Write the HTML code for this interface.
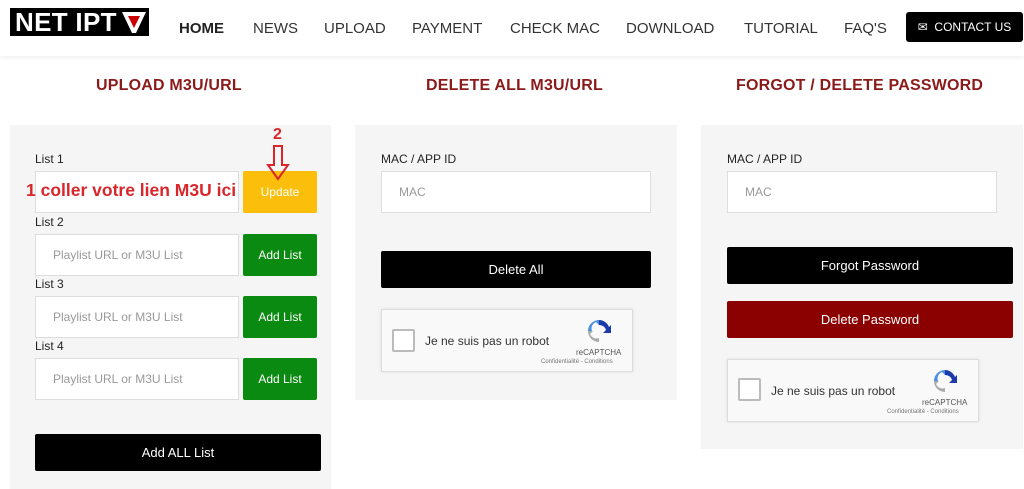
<!DOCTYPE html><html><head><meta charset="utf-8"><style>
*{box-sizing:border-box;margin:0;padding:0}
body{width:1024px;height:489px;overflow:hidden;background:#fff;font-family:"Liberation Sans",sans-serif;position:relative}
.a{position:absolute}
.nav{font-size:15px;color:#333;top:20px}
.h{font-size:16px;font-weight:bold;color:#8b1a1a;top:77px;letter-spacing:.2px}
.panel{background:#f5f5f5}
.lbl{font-size:12px;color:#222}
.inp{background:#fff;border:1px solid #ddd;font-size:12px;color:#999;padding-left:17px;display:flex;align-items:center}
.btn{display:flex;align-items:center;justify-content:center;font-size:12px;color:#fff;border-radius:2px}
.cap{background:#f9f9f9;border:1px solid #ddd;box-shadow:0 0 3px rgba(0,0,0,.1)}
</style></head><body>
<div class="a" style="left:0;top:0;width:1024px;height:56px;box-shadow:0 2px 4px rgba(0,0,0,.06)"></div>
<div class="a" style="left:10px;top:8px;width:139px;height:28px;background:#000"></div>
<div class="a" style="left:15px;top:8px;color:#fff;font-weight:bold;font-size:26px;line-height:29px;letter-spacing:0.3px;white-space:nowrap">NET IPT</div>
<svg class="a" style="left:121px;top:11px" width="26" height="23"><path d="M1 1h24L15 22h-4z" fill="#fff"/><path d="M7 5h12l-6 12z" fill="#c00"/></svg>
<div class="a nav" style="left:179px;font-weight:bold;color:#222">HOME</div>
<div class="a nav" style="left:253px">NEWS</div>
<div class="a nav" style="left:324px">UPLOAD</div>
<div class="a nav" style="left:412px">PAYMENT</div>
<div class="a nav" style="left:510px">CHECK MAC</div>
<div class="a nav" style="left:626px">DOWNLOAD</div>
<div class="a nav" style="left:744px">TUTORIAL</div>
<div class="a nav" style="left:844px">FAQ'S</div>
<div class="a btn" style="left:906px;top:12px;width:117px;height:30px;background:#000;font-size:12px;border-radius:3px">✉&nbsp; CONTACT US</div>

<div class="a h" style="left:96px">UPLOAD M3U/URL</div>
<div class="a h" style="left:426px">DELETE ALL M3U/URL</div>
<div class="a h" style="left:736px">FORGOT / DELETE PASSWORD</div>

<div class="a panel" style="left:10px;top:125px;width:321px;height:364px"></div>
<div class="a lbl" style="left:35px;top:152px">List 1</div>
<div class="a inp" style="left:35px;top:171px;width:204px;height:42px"></div>
<div class="a btn" style="left:243px;top:171px;width:74px;height:42px;background:#fbbf0b">Update</div>
<div class="a" style="left:26px;top:180px;font-size:17.5px;font-weight:bold;color:#d9262b;white-space:nowrap">1 coller votre lien M3U ici</div>
<div class="a" style="left:273px;top:126px;font-size:16px;font-weight:bold;color:#d9262b">2</div>
<svg class="a" style="left:266px;top:145px" width="24" height="36"><path d="M8 1h8v19h6L12 34 2 20h6z" fill="none" stroke="#d9262b" stroke-width="2"/></svg>
<div class="a lbl" style="left:35px;top:215px">List 2</div>
<div class="a inp" style="left:35px;top:234px;width:204px;height:42px">Playlist URL or M3U List</div>
<div class="a btn" style="left:243px;top:234px;width:74px;height:42px;background:#0a8a10">Add List</div>
<div class="a lbl" style="left:35px;top:277px">List 3</div>
<div class="a inp" style="left:35px;top:296px;width:204px;height:42px">Playlist URL or M3U List</div>
<div class="a btn" style="left:243px;top:296px;width:74px;height:42px;background:#0a8a10">Add List</div>
<div class="a lbl" style="left:35px;top:339px">List 4</div>
<div class="a inp" style="left:35px;top:358px;width:204px;height:42px">Playlist URL or M3U List</div>
<div class="a btn" style="left:243px;top:358px;width:74px;height:42px;background:#0a8a10">Add List</div>
<div class="a btn" style="left:35px;top:434px;width:286px;height:37px;background:#000;font-size:13px">Add ALL List</div>

<div class="a panel" style="left:355px;top:125px;width:322px;height:275px"></div>
<div class="a lbl" style="left:381px;top:152px">MAC / APP ID</div>
<div class="a inp" style="left:381px;top:171px;width:270px;height:42px">MAC</div>
<div class="a btn" style="left:381px;top:251px;width:270px;height:37px;background:#000;font-size:13px">Delete All</div>
<div class="a cap" style="left:381px;top:309px;width:252px;height:63px"></div>
<div class="a" style="left:392px;top:329px;width:23px;height:23px;border:2px solid #bbb;border-radius:2px;background:#fff"></div>
<div class="a" style="left:425px;top:334px;font-size:12px;color:#333">Je ne suis pas un robot</div>
<svg class="a" style="left:586px;top:318px" width="26" height="26"><path d="M13 2a11 11 0 0 1 10 7l2-2v8h-8l3-3a7 7 0 0 0-7-5z" fill="#1c3aa9"/><path d="M2 13a11 11 0 0 1 11-11v5l-3-3a7 7 0 0 0-4 9z" fill="#4a90e2"/><path d="M13 24A11 11 0 0 1 2 13h5l-3 3a7 7 0 0 0 9 4z" fill="#aaa"/></svg>
<div class="a" style="left:576px;top:348px;font-size:8px;color:#555">reCAPTCHA</div>
<div class="a" style="left:541px;top:359px;font-size:6px;color:#777">Confidentialité - Conditions</div>

<div class="a panel" style="left:701px;top:125px;width:322px;height:324px"></div>
<div class="a lbl" style="left:727px;top:152px">MAC / APP ID</div>
<div class="a inp" style="left:727px;top:171px;width:270px;height:42px">MAC</div>
<div class="a btn" style="left:727px;top:247px;width:286px;height:37px;background:#000;font-size:13px">Forgot Password</div>
<div class="a btn" style="left:727px;top:301px;width:286px;height:37px;background:#8b0000;font-size:13px">Delete Password</div>
<div class="a cap" style="left:727px;top:359px;width:252px;height:63px"></div>
<div class="a" style="left:738px;top:378px;width:23px;height:23px;border:2px solid #bbb;border-radius:2px;background:#fff"></div>
<div class="a" style="left:771px;top:384px;font-size:12px;color:#333">Je ne suis pas un robot</div>
<svg class="a" style="left:932px;top:368px" width="26" height="26"><path d="M13 2a11 11 0 0 1 10 7l2-2v8h-8l3-3a7 7 0 0 0-7-5z" fill="#1c3aa9"/><path d="M2 13a11 11 0 0 1 11-11v5l-3-3a7 7 0 0 0-4 9z" fill="#4a90e2"/><path d="M13 24A11 11 0 0 1 2 13h5l-3 3a7 7 0 0 0 9 4z" fill="#aaa"/></svg>
<div class="a" style="left:922px;top:398px;font-size:8px;color:#555">reCAPTCHA</div>
<div class="a" style="left:887px;top:409px;font-size:6px;color:#777">Confidentialité - Conditions</div>
</body></html>
